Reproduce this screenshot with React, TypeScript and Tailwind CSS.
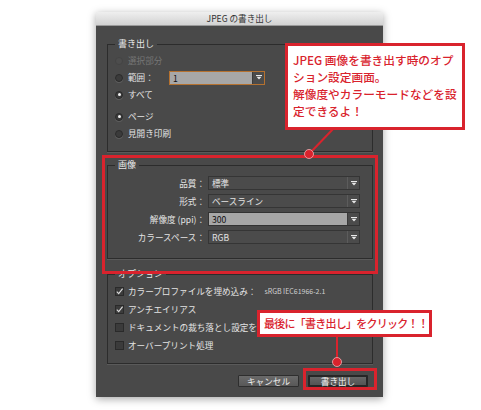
const JP = "font-['Noto_Sans_CJK_JP','Noto_Sans',sans-serif]"

function Radio({ checked, disabled }: { checked?: boolean; disabled?: boolean }) {
  return (
    <span
      className={`flex h-[8px] w-[8px] shrink-0 items-center justify-center rounded-full border ${
        disabled ? 'border-[#444] bg-[#4d4d4d]' : 'border-[#2a2a2a] bg-[#3b3b3b] shadow-[0_1px_0_#5d5d5d]'
      }`}
    >
      {checked ? <span className="h-[3px] w-[3px] rounded-full bg-[#f2f2f2]" /> : null}
    </span>
  )
}

function Check({ checked }: { checked?: boolean }) {
  return (
    <svg width="9" height="9" viewBox="0 0 9 9" className="shrink-0">
      <rect x="0.5" y="0.5" width="8" height="8" fill="#3b3b3b" stroke="#2a2a2a" />
      {checked ? <path d="M1.8 4.6 L3.7 6.6 L7.6 1.6" fill="none" stroke="#dcdcdc" strokeWidth="1.1" /> : null}
    </svg>
  )
}

function Arrow() {
  return (
    <svg width="6" height="5" viewBox="0 0 6 5">
      <rect x="0" y="0" width="6" height="1" fill="#e8e8e8" />
      <path d="M0.5 1.8 H5.5 L3 4.6 Z" fill="#e8e8e8" />
    </svg>
  )
}

function Select({ value, light }: { value: string; light?: boolean }) {
  return (
    <div
      className={`flex h-[14px] w-[152px] items-stretch border ${
        light ? 'border-[#333] bg-[#a7a7a7] text-[#111]' : 'border-[#353535] bg-[#4b4b4b] text-[#e4e4e4]'
      }`}
    >
      <span className="flex-1 pl-[3px] text-[8.6px] leading-[12px]">{value}</span>
      <span className={`flex w-[12px] items-center justify-center border-l ${light ? 'border-[#3a3a3a] bg-[#4b4b4b]' : 'border-[#5c5c5c] bg-[#4b4b4b]'}`}>
        <Arrow />
      </span>
    </div>
  )
}

function Group({ title, className, children }: { title: string; className: string; children: React.ReactNode }) {
  return (
    <fieldset className={`border border-[#2c2c2c] pl-[7px] shadow-[0_1px_0_#5a5a5a] ${className}`}>
      <legend className="px-[3px] text-[9px] leading-[12px] text-[#e8e8e8]">{title}</legend>
      {children}
    </fieldset>
  )
}

const IMAGE_ROWS = [
  { label: '品質：', value: '標準' },
  { label: '形式：', value: 'ベースライン' },
  { label: '解像度 (ppi)：', value: '300', light: true },
  { label: 'カラースペース：', value: 'RGB' },
]

export default function App() {
  return (
    <div className={`relative h-[410px] w-[481px] overflow-hidden bg-white ${JP}`}>
      <div className="pl-[96px] pt-[12px]">
        <div className="flex h-[385px] w-[287px] flex-col bg-[#494949] shadow-[0_2px_8px_rgba(0,0,0,0.35)]">
          <div className="flex h-[14px] items-center justify-center border-b border-[#9a9a9a] bg-gradient-to-b from-[#efefef] to-[#d2d2d2] text-[8.6px] leading-none text-[#333]">
            JPEG の書き出し
          </div>

          <div className="flex flex-1 flex-col pl-[11px] pr-[10px] pt-[12px] text-[8.6px] text-[#e4e4e4]">
            <Group title="書き出し" className="pb-[9px] pt-[2px]">
              <div className="flex h-[17px] items-center gap-[5px] text-[#767676]">
                <Radio disabled />
                <span>選択部分</span>
              </div>
              <div className="flex h-[17px] items-center gap-[5px]">
                <Radio />
                <span className="w-[36px]">範囲：</span>
                <div className="flex h-[14px] w-[96px] items-stretch border border-[#b5712f] bg-[#a7a7a7] text-[#111]">
                  <span className="flex-1 pl-[3px] text-[8.6px] leading-[12px]">1</span>
                  <span className="flex w-[12px] items-center justify-center border-l border-[#3a3a3a] bg-[#4b4b4b]">
                    <Arrow />
                  </span>
                </div>
              </div>
              <div className="flex h-[17px] items-center gap-[5px]">
                <Radio checked />
                <span>すべて</span>
              </div>
              <div className="mt-[5px] flex h-[17px] items-center gap-[5px]">
                <Radio checked />
                <span>ページ</span>
              </div>
              <div className="flex h-[17px] items-center gap-[5px]">
                <Radio />
                <span>見開き印刷</span>
              </div>
            </Group>

            <Group title="画像" className="mt-[7px] pb-[12px] pt-[3px]">
              {IMAGE_ROWS.map((row) => (
                <div key={row.label} className="flex h-[18px] items-center gap-[3px]">
                  <span className="w-[90px] text-right">{row.label}</span>
                  <Select value={row.value} light={row.light} />
                </div>
              ))}
            </Group>

            <Group title="オプション" className="mt-[9px] pb-[9px] pt-[2px]">
              <div className="flex h-[18px] items-center gap-[4px]">
                <Check checked />
                <span>カラープロファイルを埋め込み：</span>
                <span className="ml-[4px] text-[7px] text-[#d0d0d0]">sRGB IEC61966-2.1</span>
              </div>
              <div className="flex h-[18px] items-center gap-[4px]">
                <Check checked />
                <span>アンチエイリアス</span>
              </div>
              <div className="flex h-[18px] items-center gap-[4px]">
                <Check />
                <span>ドキュメントの裁ち落とし設定を使用</span>
              </div>
              <div className="flex h-[18px] items-center gap-[4px]">
                <Check />
                <span>オーバープリント処理</span>
              </div>
            </Group>

            <div className="mt-[11px] flex justify-end gap-[9px] pr-[5px]">
              <button className="flex h-[12px] w-[61px] items-center justify-center rounded-[1px] border border-[#2e2e2e] bg-gradient-to-b from-[#6a6a6a] to-[#585858] text-[8.6px] leading-none text-[#eee]">
                キャンセル
              </button>
              <button className="flex h-[12px] w-[60px] items-center justify-center rounded-[1px] border-2 border-[#262626] bg-gradient-to-b from-[#666] to-[#545454] text-[8.6px] leading-none text-[#f2f2f2]">
                書き出し
              </button>
            </div>
          </div>
        </div>
      </div>

      {/* highlights */}
      <div className="pointer-events-none absolute left-[102px] top-[155px] h-[119px] w-[276px] border-[3px] border-[#d9232d]" />
      <div className="pointer-events-none absolute left-[303px] top-[368px] h-[22px] w-[74px] border-[3px] border-[#d9232d]" />

      <svg className="pointer-events-none absolute left-0 top-0" width="481" height="410">
        <line x1="334" y1="128" x2="309" y2="154" stroke="#d9232d" strokeWidth="2" />
        <circle cx="309" cy="154" r="4.5" fill="#d9232d" stroke="#f3b3b6" strokeWidth="0.8" />
        <line x1="337" y1="335" x2="337" y2="362" stroke="#d9232d" strokeWidth="2" />
        <circle cx="337" cy="362" r="4.5" fill="#d9232d" stroke="#f3b3b6" strokeWidth="0.8" />
      </svg>

      {/* callouts */}
      <div className="absolute left-[285px] top-[43px] h-[87px] w-[180px] border-[3px] border-[#d9232d] bg-white pl-[5px] pt-[5px] text-[11.7px] font-medium leading-[17px] text-[#d9232d]">
        <div>JPEG 画像を書き出す時のオプ</div>
        <div>ション設定画面。</div>
        <div>解像度やカラーモードなどを設</div>
        <div>定できるよ！</div>
      </div>
      <div className="absolute left-[257px] top-[310px] flex h-[27px] w-[175px] items-center whitespace-nowrap border-[3px] border-[#d9232d] bg-white pl-[4px] text-[11px] font-medium leading-none tracking-[-0.75px] text-[#d9232d]">
        最後に「書き出し」をクリック！！
      </div>
    </div>
  )
}
